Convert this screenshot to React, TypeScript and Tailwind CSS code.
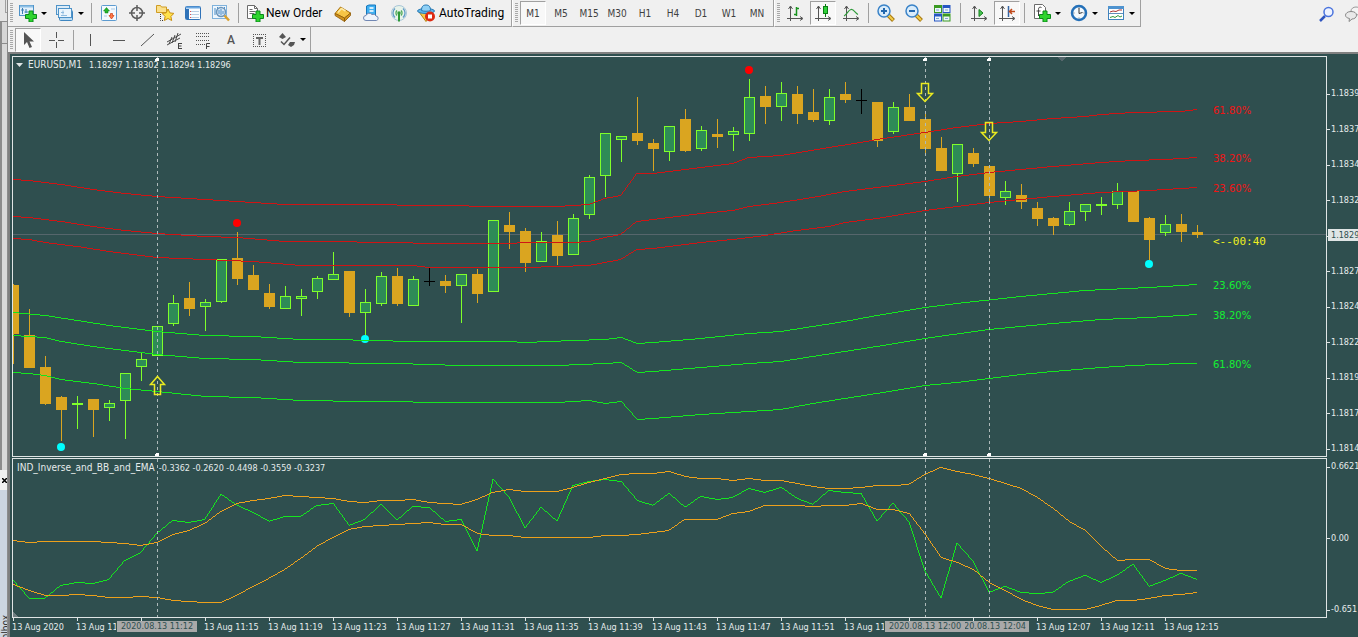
import type { ReactNode } from "react";

// #region Chart data
// y values are window pixels, x comes from the bar index
const STEP = 16;
const MAIN_TOP = 57;
const SUB_TOP = 459;

type Kind = "up" | "down" | "doji";
// [kind, open/close top, open/close bottom, high, low]
type Candle = [Kind, number, number, number, number];

const candles: Candle[] = [
  ["down", 285, 334, 284, 364],
  ["down", 335, 368, 309, 368],
  ["down", 367, 404, 356, 405],
  ["down", 397, 410, 396, 441],
  ["up", 403, 405, 396, 429],
  ["down", 399, 410, 399, 437],
  ["up", 403, 408, 400, 421],
  ["up", 373, 401, 373, 439],
  ["up", 359, 367, 352, 381],
  ["up", 326, 356, 326, 356],
  ["up", 303, 324, 295, 326],
  ["down", 298, 309, 282, 316],
  ["up", 302, 307, 299, 331],
  ["up", 259, 302, 259, 303],
  ["down", 258, 279, 232, 285],
  ["down", 275, 290, 265, 290],
  ["down", 293, 307, 284, 309],
  ["up", 296, 309, 286, 309],
  ["up", 296, 299, 289, 316],
  ["up", 278, 292, 276, 299],
  ["up", 274, 280, 252, 280],
  ["down", 271, 313, 271, 317],
  ["up", 302, 313, 289, 335],
  ["up", 276, 304, 272, 306],
  ["down", 276, 304, 268, 306],
  ["up", 279, 306, 276, 306],
  ["doji", 281, 282, 268, 286],
  ["down", 281, 286, 275, 293],
  ["up", 274, 286, 274, 323],
  ["down", 274, 294, 269, 303],
  ["up", 220, 292, 220, 292],
  ["down", 225, 232, 212, 249],
  ["down", 231, 263, 228, 272],
  ["up", 241, 262, 232, 262],
  ["down", 235, 256, 221, 265],
  ["up", 218, 255, 214, 255],
  ["up", 177, 215, 175, 219],
  ["up", 133, 176, 133, 197],
  ["up", 136, 140, 136, 162],
  ["down", 133, 141, 97, 145],
  ["down", 143, 149, 139, 171],
  ["up", 126, 152, 126, 161],
  ["down", 119, 151, 109, 152],
  ["up", 130, 149, 126, 151],
  ["down", 134, 137, 119, 148],
  ["up", 131, 135, 127, 151],
  ["up", 97, 134, 79, 141],
  ["down", 96, 107, 86, 124],
  ["up", 93, 107, 82, 121],
  ["down", 94, 114, 86, 124],
  ["down", 112, 120, 89, 122],
  ["up", 97, 121, 89, 125],
  ["down", 94, 100, 82, 103],
  ["doji", 100, 101, 89, 114],
  ["down", 102, 141, 102, 147],
  ["up", 107, 132, 102, 134],
  ["down", 107, 121, 94, 121],
  ["down", 119, 149, 112, 155],
  ["down", 148, 171, 137, 171],
  ["up", 144, 174, 144, 202],
  ["down", 153, 164, 148, 167],
  ["down", 166, 196, 166, 204],
  ["up", 191, 198, 181, 205],
  ["down", 195, 202, 184, 209],
  ["down", 208, 219, 202, 226],
  ["down", 218, 226, 217, 235],
  ["up", 211, 225, 202, 226],
  ["up", 204, 212, 204, 221],
  ["up", 204, 206, 197, 215],
  ["up", 191, 205, 183, 209],
  ["down", 191, 222, 191, 222],
  ["down", 218, 240, 217, 260],
  ["up", 224, 233, 215, 236],
  ["down", 224, 232, 214, 242],
  ["down", 232, 235, 225, 238],
];

// [bar, y] pairs
type Pts = [number, number][];

const redBands: Pts[] = [
  [[0, 179], [1, 180], [3, 184], [5, 189], [7, 193], [9, 196], [12, 199], [14, 201], [17, 204], [20, 204], [28, 205], [29, 206], [34, 206], [36, 204], [37, 198], [38, 195], [39, 173], [40, 173], [42, 169], [45, 163], [46, 157], [48, 155], [51, 147], [53, 142], [54, 139], [57, 132], [59, 127], [61, 123], [63, 121], [65, 118], [67, 116], [68, 114], [70, 112], [73, 111], [74, 109]],
  [[0, 216], [1, 217], [3, 221], [5, 226], [7, 230], [9, 233], [12, 236], [14, 237], [17, 241], [21, 241], [22, 242], [28, 243], [35, 242], [36, 241], [37, 237], [38, 234], [39, 221], [40, 219], [43, 213], [45, 210], [46, 206], [48, 202], [50, 197], [52, 191], [54, 187], [57, 181], [59, 176], [61, 172], [63, 169], [65, 166], [68, 162], [70, 160], [72, 159], [74, 157]],
  [[0, 238], [1, 239], [2, 242], [4, 246], [6, 251], [9, 257], [12, 259], [15, 261], [18, 265], [25, 265], [26, 267], [32, 267], [36, 265], [37, 262], [38, 259], [39, 249], [40, 248], [43, 242], [45, 239], [47, 235], [49, 230], [51, 226], [52, 222], [54, 218], [57, 210], [59, 206], [61, 202], [63, 199], [65, 196], [68, 192], [71, 190], [74, 187]],
];

const greenBands: Pts[] = [
  [[0, 312], [2, 315], [4, 320], [6, 325], [7, 327], [9, 331], [12, 335], [15, 336], [18, 339], [20, 339], [25, 341], [31, 341], [32, 342], [35, 340], [37, 339], [38, 337], [39, 343], [40, 342], [43, 338], [46, 333], [48, 331], [50, 326], [52, 321], [54, 315], [57, 307], [59, 303], [63, 296], [65, 293], [67, 290], [71, 287], [74, 284]],
  [[0, 335], [2, 337], [3, 341], [5, 346], [7, 350], [9, 354], [12, 358], [15, 359], [18, 362], [24, 363], [28, 365], [34, 365], [37, 363], [38, 362], [39, 372], [40, 371], [43, 367], [46, 363], [48, 361], [50, 356], [52, 351], [54, 346], [57, 338], [61, 329], [65, 323], [68, 319], [71, 317], [74, 314]],
  [[0, 372], [1, 373], [2, 375], [3, 379], [5, 383], [7, 388], [9, 391], [12, 396], [15, 397], [18, 400], [22, 401], [28, 402], [34, 402], [36, 400], [37, 403], [38, 401], [39, 419], [40, 418], [43, 414], [46, 411], [48, 409], [50, 403], [52, 398], [54, 393], [57, 385], [59, 382], [63, 374], [65, 371], [68, 367], [70, 365], [73, 363], [74, 363]],
];

const upperBand = [
  540, 542, 541, 541, 541, 541, 542, 543, 545, 542, 534, 530, 523, 511, 503, 500, 498, 495, 496, 497, 498, 501, 502, 500, 500,
  499, 502, 503, 504, 499, 492, 489, 491, 491, 491, 487, 482, 478, 474, 473, 473, 471, 476, 478, 478, 480, 478, 480, 480, 483,
  486, 488, 488, 487, 485, 485, 484, 474, 467, 471, 474, 478, 483, 488, 497, 508, 521, 530, 546, 560, 559, 559, 568, 570, 570,
];
const lowerBand = [
  584, 590, 595, 595, 594, 595, 597, 597, 596, 597, 600, 601, 602, 602, 595, 586, 578, 569, 558, 546, 537, 529, 526, 525, 524,
  523, 522, 524, 524, 533, 535, 535, 537, 537, 537, 537, 537, 535, 535, 534, 532, 530, 519, 519, 519, 513, 511, 505, 505, 505,
  506, 505, 505, 503, 509, 509, 513, 534, 557, 562, 569, 582, 590, 599, 605, 609, 609, 609, 605, 600, 600, 598, 595, 594, 592,
];
const signal = [
  580, 598, 598, 585, 582, 583, 579, 560, 552, 533, 520, 522, 519, 494, 505, 512, 521, 516, 516, 505, 503, 525, 519, 504, 520,
  506, 507, 521, 519, 551, 479, 497, 528, 507, 521, 485, 481, 479, 481, 500, 505, 493, 507, 496, 499, 497, 488, 492, 487, 498,
  504, 490, 492, 493, 521, 503, 522, 571, 598, 543, 561, 592, 586, 592, 593, 592, 581, 575, 582, 575, 564, 586, 580, 573, 579,
];

const marks = [9, 57, 61];
const dots = [
  { bar: 3, y: 447, fill: "#00ffff" },
  { bar: 22, y: 339, fill: "#00ffff" },
  { bar: 71, y: 264, fill: "#00ffff" },
  { bar: 14, y: 223, fill: "#ff0000" },
  { bar: 46, y: 70, fill: "#ff0000" },
];
const levels = [
  { y: 110, text: "61.80%", fill: "#f01414" },
  { y: 158, text: "38.20%", fill: "#f01414" },
  { y: 188, text: "23.60%", fill: "#f01414" },
  { y: 285, text: "23.60%", fill: "#14f032" },
  { y: 315, text: "38.20%", fill: "#14f032" },
  { y: 364, text: "61.80%", fill: "#14f032" },
];
const prices = ["1.1839", "1.1837", "1.1834", "1.1832", "", "1.1827", "1.1824", "1.1822", "1.1819", "1.1817", "1.1814"];
// an empty label keeps its tick but makes room for a date tag
const times = [
  "13 Aug 2020", "13 Aug 11:07", "", "13 Aug 11:15", "13 Aug 11:19", "13 Aug 11:23", "13 Aug 11:27",
  "13 Aug 11:31", "13 Aug 11:35", "13 Aug 11:39", "13 Aug 11:43", "13 Aug 11:47", "13 Aug 11:51", "13 Aug 11:55",
  "", "", "13 Aug 12:07", "13 Aug 12:11", "13 Aug 12:15",
];
const timeframes = ["M1", "M5", "M15", "M30", "H1", "H4", "D1", "W1", "MN"];
// #endregion

// One pixel wide columns, so that flat slopes stay crisp and unbroken
const trace = (pts: Pts) => {
  let d = "";
  for (let k = 1; k < pts.length; k++) {
    const x0 = pts[k - 1][0] * STEP;
    const x1 = pts[k][0] * STEP;
    const y0 = pts[k - 1][1];
    const slope = (pts[k][1] - y0) / (x1 - x0);
    for (let x = x0; x < x1; x++) {
      const a = Math.round(y0 + slope * (x - x0));
      const b = Math.round(y0 + slope * (x + 1 - x0));
      const h = Math.max(1, Math.abs(b - a));
      d += `M${x} ${Math.min(a, b)}h1v${h}h-1z`;
    }
  }
  return d;
};
const series = (ys: number[]): Pts => ys.map((y, i) => [i, y]);

// #region Icons
const Icon = ({ children, size = 18 }: { children: ReactNode; size?: number }) => (
  <svg width={size} height={size} viewBox="0 0 18 18" fill="none" aria-hidden="true" className="shrink-0">
    {children}
  </svg>
);

const Plus = () => <path d="M10 7h4v3.500h3.500v4H14V18h-4v-3.500H6.500v-4H10z" fill="#2fd42f" stroke="#0b8a1a" />;

const NewChartIcon = () => (
  <Icon>
    <rect x="0.500" y="1.500" width="14" height="10" fill="#e4f1fb" stroke="#4f93c8" />
    <path d="M1 2.500h13" stroke="#8fc0e6" strokeWidth="2" />
    <path d="M3.500 4v6M2 6h3M7 5v4M5.500 8H9" stroke="#3b7cb4" />
    <Plus />
  </Icon>
);
const ProfilesIcon = () => (
  <Icon>
    <rect x="0.500" y="1.500" width="13" height="9" fill="#dcecf8" stroke="#4f93c8" />
    <rect x="3.500" y="6.500" width="13" height="10" rx="1" fill="#b9dcf5" stroke="#3f86c0" />
    <rect x="2.500" y="4.500" width="13" height="9" fill="#eaf5fd" stroke="#4f93c8" />
    <path d="M5 8.500h3M5 11.500h6M7 6.500v4" stroke="#8dbbe0" />
  </Icon>
);
const MarketWatchIcon = () => (
  <Icon>
    <rect x="1.500" y="1.500" width="15" height="15" rx="1" fill="#f3f9fe" stroke="#5d9bd0" />
    <path d="M3.500 7l3-3.500 3 3.500H8v2H5V7z" fill="#23b52b" stroke="#0d7c18" strokeWidth="0.500" />
    <path d="M9 11.500h1.500v-2h2v2H14L11.500 15z" fill="#ff7a4a" stroke="#d03a10" strokeWidth="0.700" />
    <path d="M4 12h3M11 5h4" stroke="#a9c8e2" />
  </Icon>
);
const DataWindowIcon = () => (
  <Icon>
    <circle cx="9" cy="9" r="5.500" stroke="#5c5c5c" strokeWidth="1.500" />
    <path d="M9 1v6M9 11v6M1 9h6M11 9h6" stroke="#5c5c5c" strokeWidth="1.500" />
  </Icon>
);
const NavigatorIcon = () => (
  <Icon>
    <path d="M0.500 8.500v-7h4l1 1.500h5v5.500z" fill="#fbe08a" stroke="#cf9c24" />
    <path d="M4.500 10v6.500h3" stroke="#333" strokeDasharray="1 1" />
    <path d="M12 5l1.900 3.900 4 .5-3 3 .8 4.100-3.700-2-3.700 2 .8-4.100-3-3 4-.5z" fill="#ffe14a" stroke="#c98f13" />
  </Icon>
);
const TerminalIcon = () => (
  <Icon>
    <rect x="1.500" y="2.500" width="15" height="13" rx="1" fill="#fbfdff" stroke="#2f72b8" />
    <path d="M2 3.500h14" stroke="#6aa7e0" strokeWidth="2" />
    <path d="M3.500 5v10" stroke="#2f72b8" strokeWidth="3" />
    <path d="M7 7.500h8M7 10.500h8M7 13.500h8" stroke="#b8cfe4" />
    <path d="M6 7.500h1M6 10.500h1M6 13.500h1" stroke="#e05050" />
  </Icon>
);
const TesterIcon = () => (
  <Icon>
    <rect x="0.500" y="1.500" width="14" height="13" fill="#eef6fd" stroke="#7fb2dc" />
    <path d="M3 4v7M5.500 3v5M12.500 3v5" stroke="#4d8fc9" />
    <circle cx="9" cy="8" r="4.500" fill="#d5e6f5" fillOpacity="0.900" stroke="#6c96bb" strokeWidth="1.500" />
    <path d="M7 6v4M9 5v6M11 7v3" stroke="#4d8fc9" />
    <path d="M12.500 11.500l4.500 5" stroke="#d9a02c" strokeWidth="2.500" />
  </Icon>
);
const NewOrderIcon = () => (
  <Icon>
    <path d="M1.500 1.500h7l3 3v10h-10z" fill="#fff" stroke="#6b6b6b" />
    <path d="M8.500 1.500v3h3M3.500 5.500h3M3.500 7.500h6M3.500 9.500h5" stroke="#6b6b6b" />
    <Plus />
  </Icon>
);
const BookIcon = () => (
  <Icon>
    <path d="M1 9.500l5.500-6.500 10 6-6 5z" fill="#f6c445" stroke="#a8700c" />
    <path d="M1 9.500v2l9.500 6V14zM10.500 17.500l6-6V9l-6 5z" fill="#d0921e" stroke="#8f5c08" strokeWidth="0.800" />
    <path d="M4 8.500l3.500-4 4 2.500" stroke="#fde9a4" strokeWidth="1.500" />
  </Icon>
);
const CloudIcon = () => (
  <Icon>
    <path d="M4.500 2L7 1h6.500v11h-9z" fill="#3fb0f2" stroke="#1577bd" />
    <path d="M7.500 4h4M7.500 7h4" stroke="#fff" strokeWidth="1.500" />
    <path d="M4 16.500a2.500 2.500 0 010-5 3.500 3.500 0 016-1 3 3 0 014 1.500 2.300 2.300 0 01.5 4.500z" fill="#eef3fb" stroke="#7187b3" />
  </Icon>
);
const SignalIcon = () => (
  <Icon>
    <circle cx="9" cy="9" r="7.500" fill="#e8f3ea" stroke="#a8c6d8" />
    <path d="M5 13.500a6 6 0 010-9M13 13.500a6 6 0 000-9" stroke="#5f9ac8" strokeWidth="1.300" />
    <path d="M7 11.500a3.500 3.500 0 010-5M11 11.500a3.500 3.500 0 000-5" stroke="#52aa5c" strokeWidth="1.300" />
    <circle cx="9" cy="9" r="1.700" fill="#2f9a3a" />
    <path d="M9 10v7.500" stroke="#2f9a3a" strokeWidth="2" />
  </Icon>
);
const AutoTradingIcon = () => (
  <Icon>
    <path d="M2 8l7 9.500L16 8z" fill="#f7c948" stroke="#b5820f" />
    <ellipse cx="9" cy="7" rx="8.500" ry="2.500" fill="#5db4ea" stroke="#2a7bb5" />
    <path d="M4.500 6.500C4.500 2.500 6 1 9 1s4.500 1.500 4.500 5.500c-2 1-7 1-9 0z" fill="#8fd0f5" stroke="#2a7bb5" />
    <circle cx="13" cy="12.500" r="5" fill="#dd2a12" />
    <rect x="11" y="10.500" width="4" height="4" fill="#fff" />
  </Icon>
);

const Axes = () => (
  <>
    <path d="M4.500 2v15M1 14.500h15" stroke="#555" />
    <path d="M2.500 5l2-3 2 3M14 12.500l3 2-3 2" stroke="#555" />
  </>
);
const BarsIcon = () => (
  <Icon>
    <Axes />
    <path d="M10.500 3v9M8 10.500h2M11 4.500h2" stroke="#18921f" strokeWidth="1.500" />
  </Icon>
);
const CandlesIcon = () => (
  <Icon>
    <Axes />
    <path d="M11.500 0v13" stroke="#0c7c14" />
    <rect x="9.500" y="2.500" width="4" height="7" fill="#2fd23a" stroke="#0c7c14" />
  </Icon>
);
const LineIcon = () => (
  <Icon>
    <Axes />
    <path d="M2 12c3-1 4-6 7-6.500S13 9 16 10.500" stroke="#2f9a3a" strokeWidth="1.200" />
  </Icon>
);
const ZoomIcon = ({ plus = false }: { plus?: boolean }) => (
  <Icon>
    <path d="M11 11l5.500 5.500" stroke="#a87810" strokeWidth="4" />
    <path d="M11 11l5 5" stroke="#f2cd4a" strokeWidth="2" />
    <circle cx="7" cy="7" r="6" fill="#d9ecfb" stroke="#3a83c8" strokeWidth="1.500" />
    <path d={plus ? "M7 4v6M4 7h6" : "M4 7h6"} stroke="#2268ae" strokeWidth="2" />
  </Icon>
);
const TileIcon = () => (
  <Icon>
    <rect x="1" y="1" width="8" height="8" fill="#3b9a22" />
    <rect x="9.500" y="1" width="8" height="8" fill="#2757c4" />
    <rect x="1" y="9.500" width="8" height="8" fill="#2757c4" />
    <rect x="9.500" y="9.500" width="8" height="8" fill="#3b9a22" />
    <path d="M2 4h6v4H2zM10.500 4h6v4h-6zM2 12.500h6v4H2zM10.500 12.500h6v4h-6z" fill="#eef5fb" />
    <path d="M3 6h3M12 6h3M3 14.500h3M12 14.500h3" stroke="#7fa8d0" />
  </Icon>
);
const ScrollIcon = () => (
  <Icon>
    <Axes />
    <path d="M9 5.500v7l4-3.500z" fill="#49c453" stroke="#15801d" />
  </Icon>
);
const ShiftIcon = () => (
  <Icon>
    <Axes />
    <path d="M10.500 2v11" stroke="#3465a4" strokeWidth="1.500" />
    <path d="M17 7.500h-5M14 5l-2.500 2.500L14 10" stroke="#c0481a" strokeWidth="1.500" />
  </Icon>
);
const IndicatorsIcon = () => (
  <Icon>
    <path d="M1.500 0.500h8l3 3v11h-11z" fill="#fff" stroke="#6b6b6b" />
    <path d="M8.500 3.500c-2-1-3 0-3 2V12M3.500 7h4" stroke="#444" />
    <Plus />
  </Icon>
);
const ClockIcon = () => (
  <Icon>
    <circle cx="9" cy="9" r="7" fill="#f4f9fd" stroke="#2470b8" strokeWidth="2.500" />
    <path d="M9 4v5.500l3.500-1" stroke="#333" />
    <path d="M9 3.500v1M9 13.500v1M3.500 9h1M13.500 9h1" stroke="#777" />
  </Icon>
);
const TemplateIcon = () => (
  <Icon>
    <rect x="1.500" y="2.500" width="15" height="13" fill="#fff" stroke="#3f82bd" />
    <path d="M1 3.500h16" stroke="#4f93cf" strokeWidth="3" />
    <path d="M2 9.500h14" stroke="#5f8fb8" />
    <path d="M3 8l3-1 3 .5 3-1.500h3" stroke="#a33" />
    <path d="M3 13.500l3-1 2 1 3-2 2 1.500 2-1" stroke="#2f9a3a" />
  </Icon>
);

const CursorIcon = () => (
  <Icon>
    <path d="M5 1v13l3-3 2.500 6 2.500-1-2.500-5.500H15z" fill="#555" />
  </Icon>
);
const CrosshairIcon = () => (
  <Icon>
    <path d="M9.500 1v6M9.500 11v6M2 9.500h6M11 9.500h6" stroke="#555" />
  </Icon>
);
const VLineIcon = () => (
  <Icon>
    <path d="M8.500 3v12" stroke="#555" />
  </Icon>
);
const HLineIcon = () => (
  <Icon>
    <path d="M3 9.500h12" stroke="#555" />
  </Icon>
);
const TrendIcon = () => (
  <Icon>
    <path d="M3 15L16 3" stroke="#555" />
  </Icon>
);
const ChannelIcon = () => (
  <Icon>
    <path d="M1 11L15 3M1 14L14 7M3 13l3-7M6 12l3-8M9 11l3-9" stroke="#4a4a4a" />
    <path d="M12 12.500h4M12 15h3.500M12 17.500h4M12.500 12v6" stroke="#444" />
  </Icon>
);
const FiboIcon = () => (
  <Icon>
    <path d="M2 2.500h14M2 5.500h14M2 9.500h14M2 13.500h9" stroke="#555" strokeDasharray="1 1" />
    <path d="M12.500 18v-5.500H16M12.500 15.500h3" stroke="#444" />
  </Icon>
);
const LabelIcon = () => (
  <Icon>
    <path d="M3 3.500h13M3 15.500h13M3.500 3v13M15.500 3v13" stroke="#555" strokeDasharray="1 1" />
    <path d="M6 6h7v2H6zM8.500 6h2v8h-2z" fill="#666" />
  </Icon>
);
const ShapesIcon = () => (
  <Icon>
    <path d="M1 6l3.500-4L8 6l-3.500 2z" fill="#555" />
    <path d="M10 14l2-3h5l-1 3-3 2z" fill="#555" />
    <path d="M3 10.500l3 3 6-7" stroke="#555" strokeWidth="1.500" />
  </Icon>
);
const SearchIcon = () => (
  <Icon>
    <path d="M7 11l-5 5" stroke="#2f55c0" strokeWidth="2.500" />
    <circle cx="10.500" cy="7" r="4.500" fill="#eef3ff" stroke="#4a73dd" strokeWidth="1.500" />
  </Icon>
);
const ChatIcon = () => (
  <Icon>
    <ellipse cx="12" cy="6" rx="5" ry="4" fill="#f4f4f4" stroke="#999" />
    <path d="M7 6.500c3.500 0 5.500 1.500 5.500 3.700S10.500 14 8 14l-3 2.500.5-3C3 13 1.500 12 1.500 10.200S3.500 6.500 7 6.500z" fill="#e9e9e9" stroke="#888" />
  </Icon>
);
// #endregion

// #region Toolbar parts
const Grip = () => (
  <div className="mr-px ml-0.5 h-5 w-[3px] shrink-0 bg-[repeating-linear-gradient(to_bottom,#a8a8a8_0_1px,transparent_1px_2px)]" />
);
const Divider = ({ wide = false }: { wide?: boolean }) => (
  <div className={wide ? "mx-1 h-5 w-px shrink-0 bg-[#a0a0a0]" : "mx-[3px] h-5 w-px shrink-0 bg-[#a0a0a0]"} />
);
const Caret = () => (
  <svg width="6" height="3" viewBox="0 0 6 3" aria-hidden="true">
    <path d="M0 0h6L3 3z" fill="#000" />
  </svg>
);

const Tool = ({ label, active = false, children }: { label: string; active?: boolean; children: ReactNode }) => (
  <button
    type="button"
    aria-label={label}
    aria-pressed={active}
    className={
      active
        ? "mx-px flex h-6 w-[26px] shrink-0 items-center justify-center border border-t-[#a0a0a0] border-r-white border-b-white border-l-[#a0a0a0] bg-[#f8f8f8]"
        : "flex h-6 w-7 shrink-0 items-center justify-center"
    }
  >
    {children}
  </button>
);
const DropTool = ({ label, children }: { label: string; children: ReactNode }) => (
  <button type="button" aria-label={label} className="flex h-6 w-[37px] shrink-0 items-center gap-1 pl-[5px]">
    {children}
    <Caret />
  </button>
);
const group = "flex h-full shrink-0 items-center border-r border-b border-[#a0a0a0]";

const TopToolbar = () => (
  <div className="flex h-[27px] items-center justify-between">
    <div className="flex h-full">
      <div className={`${group} pr-1`}>
        <Grip />
        <DropTool label="New chart"><NewChartIcon /></DropTool>
        <DropTool label="Profiles"><ProfilesIcon /></DropTool>
        <Divider />
        <Tool label="Market Watch"><MarketWatchIcon /></Tool>
        <Tool label="Data Window"><DataWindowIcon /></Tool>
        <Tool label="Navigator"><NavigatorIcon /></Tool>
        <Tool label="Terminal"><TerminalIcon /></Tool>
        <Tool label="Strategy Tester"><TesterIcon /></Tool>
        <Divider />
        <button type="button" className="flex h-6 w-[87px] shrink-0 items-center gap-0.5 pl-1 font-[Roboto,sans-serif] text-xs whitespace-nowrap text-black">
          <NewOrderIcon />
          New Order
        </button>
        <Tool label="MetaEditor"><BookIcon /></Tool>
        <Tool label="Cloud"><CloudIcon /></Tool>
        <Tool label="Signals"><SignalIcon /></Tool>
        <button type="button" className="flex h-6 w-[94px] shrink-0 items-center gap-1 pl-1 font-[Roboto,sans-serif] text-xs whitespace-nowrap text-black">
          <AutoTradingIcon />
          AutoTrading
        </button>
      </div>
      <div className={`${group} border-l border-l-white pr-0.5`}>
        <Grip />
        {timeframes.map((tf) => (
          <Tool key={tf} label={tf} active={tf === "M1"}>
            <span className="text-[10px] text-[#404040]">{tf}</span>
          </Tool>
        ))}
      </div>
      <div className={`${group} border-l border-l-white pr-px`}>
        <Grip />
        <Tool label="Bar chart"><BarsIcon /></Tool>
        <Tool label="Candlesticks" active><CandlesIcon /></Tool>
        <Tool label="Line chart"><LineIcon /></Tool>
        <Divider />
        <Tool label="Zoom in"><ZoomIcon plus /></Tool>
        <Tool label="Zoom out"><ZoomIcon /></Tool>
        <Tool label="Tile windows"><TileIcon /></Tool>
        <Divider wide />
        <Tool label="Auto scroll"><ScrollIcon /></Tool>
        <Tool label="Chart shift" active><ShiftIcon /></Tool>
        <Divider />
        <DropTool label="Indicators"><IndicatorsIcon /></DropTool>
        <DropTool label="Periods"><ClockIcon /></DropTool>
        <DropTool label="Templates"><TemplateIcon /></DropTool>
      </div>
    </div>
    <div className="flex w-11 shrink-0 items-center gap-2 overflow-hidden pl-1">
      <button type="button" aria-label="Search" className="shrink-0"><SearchIcon /></button>
      <button type="button" aria-label="Chat" className="shrink-0"><ChatIcon /></button>
    </div>
  </div>
);

const DrawToolbar = () => (
  <div className="flex h-[25px]">
    <div className={`${group} border-b-0`}>
      <Grip />
      <Tool label="Cursor" active><CursorIcon /></Tool>
      <Tool label="Crosshair"><CrosshairIcon /></Tool>
      <Divider />
      <Tool label="Vertical line"><VLineIcon /></Tool>
      <Tool label="Horizontal line"><HLineIcon /></Tool>
      <Tool label="Trendline"><TrendIcon /></Tool>
      <Tool label="Equidistant channel"><ChannelIcon /></Tool>
      <Tool label="Fibonacci retracement"><FiboIcon /></Tool>
      <Tool label="Text"><span className="font-[Roboto,sans-serif] text-xs font-medium text-[#555]">A</span></Tool>
      <Tool label="Text label"><LabelIcon /></Tool>
      <DropTool label="Arrows"><ShapesIcon /></DropTool>
    </div>
  </div>
);
// #endregion

// #region Charts
const CandleShape = ({ candle, x }: { candle: Candle; x: number }) => {
  const [kind, top, bottom, high, low] = candle;
  if (kind === "doji") {
    return (
      <g fill="#000">
        <rect x={x} y={high} width="1" height={low - high} />
        <rect x={x - 5} y={top} width="11" height="1" />
      </g>
    );
  }
  const color = kind === "up" ? "#7fff2a" : "#daa520";
  return (
    <g fill={color}>
      <rect x={x} y={high} width="1" height={low - high} />
      <rect x={x - 5} y={top} width="11" height={bottom - top} />
      {kind === "up" && bottom - top > 2 && <rect x={x - 4} y={top + 1} width="9" height={bottom - top - 2} fill="#2e8b57" />}
    </g>
  );
};

const Marks = ({ from, to }: { from: number; to: number }) => (
  <g transform="translate(0.500 0)" stroke="#aebaba" strokeDasharray="3 3">
    {marks.map((bar) => (
      <line key={bar} x1={bar * STEP} x2={bar * STEP} y1={from} y2={to} />
    ))}
  </g>
);

const MainChart = () => (
  <svg className="block h-full w-full" shapeRendering="crispEdges" role="img" aria-label="EURUSD,M1">
    <g transform={`translate(0 ${-MAIN_TOP})`}>
      <path d="M1044 57h9l-4 5z" fill="#56666c" />
      <rect x="0" y="234" width="100%" height="1" fill="#56666c" />
      {candles.map((c, i) => (
        <CandleShape key={i} candle={c} x={i * STEP} />
      ))}
      {dots.map((d) => (
        <circle key={d.bar} cx={d.bar * STEP} cy={d.y} r="4" fill={d.fill} shapeRendering="auto" />
      ))}
      {redBands.map((b, i) => (
        <path key={i} d={trace(b)} fill="#d01414" />
      ))}
      {greenBands.map((b, i) => (
        <path key={i} d={trace(b)} fill="#14e61e" />
      ))}
      <Marks from={57} to={456} />
      <g fill="none" stroke="#eaea20" strokeWidth="1.500" shapeRendering="auto">
        <path d="M144.500 376.500l7 8h-4v10h-6v-10h-4z" />
        <path d="M908.500 83.500h7v10h4l-7.500 8-7.500-8h4z" />
        <path d="M972.500 122.500h7v10h4l-7.500 8-7.500-8h4z" />
      </g>
      {marks.map((bar) => (
        <path key={bar} d={`M${bar * STEP - 2} 61v-2l1-1h3v3zM${bar * STEP - 2} 456v-2l1-1h3v3z`} fill="#fff" />
      ))}
      <g className="font-['DejaVu_Sans',sans-serif] text-[10px]">
        {levels.map((l) => (
          <text key={l.y} x="1200" y={l.y + 4} fill={l.fill}>
            {l.text}
          </text>
        ))}
      </g>
      <text x="1200" y="245" fill="#f0f01e" className="font-['DejaVu_Sans_Mono',monospace] text-[11px]">
        {"<--00:40"}
      </text>
    </g>
  </svg>
);

const SubChart = () => (
  <svg className="block h-full w-full" shapeRendering="crispEdges" role="img" aria-label="IND_Inverse_and_BB_and_EMA">
    <g transform={`translate(0 ${-SUB_TOP})`}>
      <path d="M0 612l5 5H0z" fill="#6f7f82" />
      <path d={trace(series(signal))} fill="#14e61e" />
      <path d={trace(series(upperBand))} fill="#eda01c" />
      <path d={trace(series(lowerBand))} fill="#eda01c" />
      <Marks from={459} to={617} />
    </g>
  </svg>
);

const PriceRow = ({ children }: { children: ReactNode }) => (
  <div className="flex h-4 items-center gap-px whitespace-nowrap">
    <span className="h-px w-[3px] shrink-0 bg-[#dfe5e5]" />
    {children}
  </div>
);

const timeTag = "absolute top-[3px] h-[11px] overflow-hidden bg-[#a9a9a9] leading-[11px] whitespace-nowrap text-[#2f4f4f]";

const ChartWindow = () => (
  <div className="flex min-h-0 flex-1 flex-col overflow-hidden border-t-2 border-l-2 border-[#808080] bg-[#2f4f4f] pt-0.5 pl-0.5 text-[#e6ecec]">
    <div className="flex">
      <div className="relative h-[401px] min-w-0 flex-1 border border-[#dfe5e5]">
        <MainChart />
        <div className="absolute top-0 left-[3px] flex h-4 items-center gap-[5px] whitespace-nowrap">
          <svg width="7" height="4" viewBox="0 0 7 4" aria-hidden="true">
            <path d="M0 0h7L3.500 4z" fill="#dfe5e5" />
          </svg>
          <div className="flex items-baseline gap-[7px]">
            <span className="text-[10px]">EURUSD,M1</span>
            <span>1.18297 1.18302 1.18294 1.18296</span>
          </div>
        </div>
      </div>
      <div className="relative flex w-[31px] shrink-0 flex-col justify-between overflow-hidden pt-[30px]">
        {prices.map((p, i) => (
          <PriceRow key={i}>{p}</PriceRow>
        ))}
        <div className="absolute top-[173px] left-[1px] h-3 w-full bg-[#dfe5e5] pl-[3px] leading-3 text-[#2f4f4f]">1.1829</div>
      </div>
    </div>
    <div className="mt-px flex">
      <div className="relative h-40 min-w-0 flex-1 border border-[#dfe5e5]">
        <SubChart />
        <div className="absolute top-px left-1 flex items-baseline gap-1 whitespace-nowrap">
          <span className="text-[10px]">IND_Inverse_and_BB_and_EMA</span>
          <span>-0.3362 -0.2620 -0.4498 -0.3559 -0.3237</span>
        </div>
      </div>
      <div className="flex w-[31px] shrink-0 flex-col justify-between overflow-hidden pt-px">
        <PriceRow>0.6621</PriceRow>
        <PriceRow>0.00</PriceRow>
        <PriceRow>-0.651</PriceRow>
      </div>
    </div>
    <div className="relative flex min-h-[19px] flex-1 overflow-hidden">
      {times.map((t, i) => (
        <div key={i} className="w-16 shrink-0 whitespace-nowrap">
          <div className="ml-px h-[3px] w-px bg-[#dfe5e5]" />
          <div className={times[i + 1] === "" ? "w-10 overflow-hidden leading-3" : "leading-3"}>{t}</div>
        </div>
      ))}
      <div className={`${timeTag} left-[105px] w-20 text-center`}>2020.08.13 11:12</div>
      <div className={`${timeTag} left-[873px] w-20 text-center`}>2020.08.13 12:00</div>
      <div className={`${timeTag} left-[953px] flex w-16 justify-end pr-[3px]`}>2020.08.13 12:04</div>
    </div>
  </div>
);
// #endregion

// Edge of the docked panels, mostly hidden behind the chart window
const DockEdge = () => (
  <aside className="flex w-2 shrink-0 flex-col overflow-hidden border-r border-[#8c8c8c] bg-[#e4e4e4]">
    <div className="ml-[5px] h-[13px] border-b border-l border-[#a0a0a0]" />
    <div className="mt-2 h-[22px] border-t border-l-2 border-[#8c8c8c] bg-[#d6d6d6]" />
    <div className="h-[427px] border-t border-l-2 border-[#8c8c8c] bg-[#d9d9d9]" />
    <button type="button" aria-label="Close" className="flex h-5 items-center justify-end bg-[#f0f0f0]">
      <svg width="5" height="5" viewBox="0 0 5 5" aria-hidden="true">
        <path d="M0 0l5 5M5 0L0 5" stroke="#000" strokeWidth="1.500" />
      </svg>
    </button>
    <div className="flex flex-1 items-end bg-[#ccd5e0]">
      <span className="-mb-3 text-[10px] leading-3 whitespace-nowrap text-[#333] [writing-mode:sideways-lr]">Toolbox</span>
    </div>
  </aside>
);

const App = () => {
  return (
    <div className="flex h-screen overflow-hidden bg-[#f0f0f0] font-['DejaVu_Sans_Condensed','DejaVu_Sans',sans-serif] text-[9px]">
      <DockEdge />
      <div className="flex min-w-0 flex-1 flex-col">
        <TopToolbar />
        <DrawToolbar />
        <ChartWindow />
      </div>
    </div>
  );
};

export default App;
